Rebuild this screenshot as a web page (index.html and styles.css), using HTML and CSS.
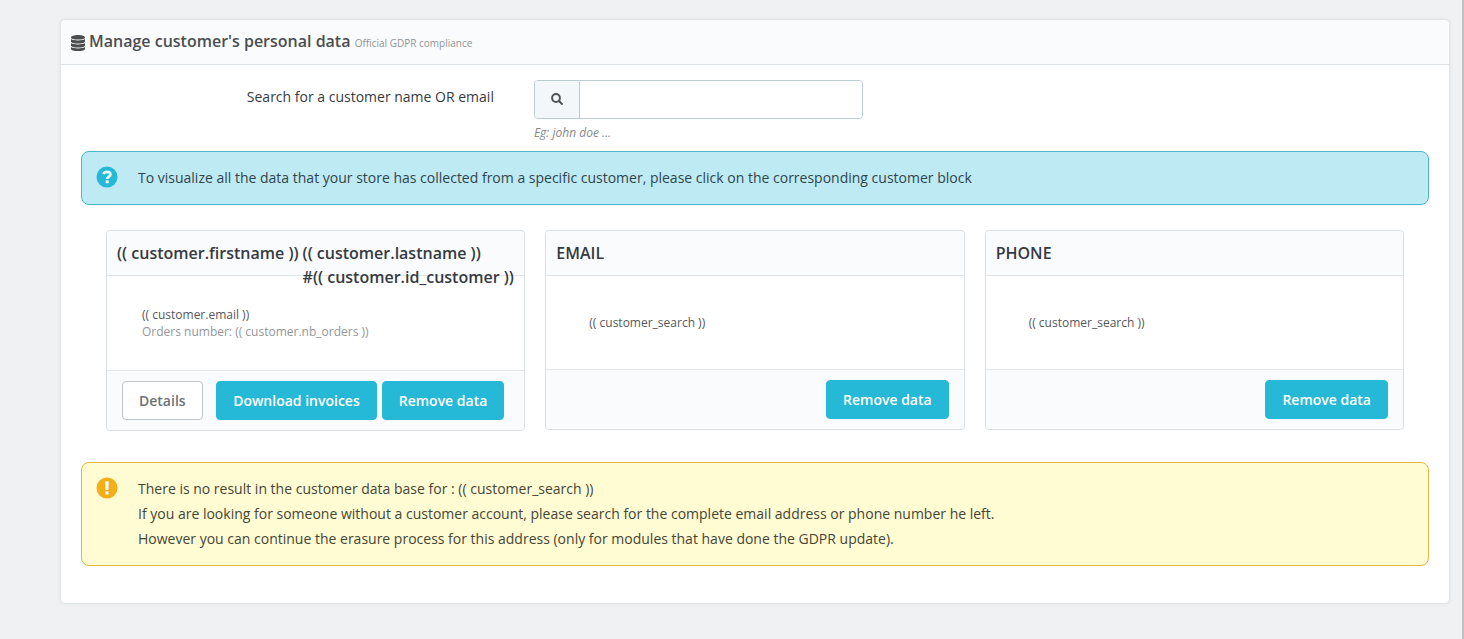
FILE: index.html
```html
<!DOCTYPE html>
<html lang="en">
<head>
<meta charset="utf-8">
<meta name="viewport" content="width=device-width, initial-scale=1">
<title>Manage customer's personal data</title>
<link rel="stylesheet" href="styles.css">
</head>
<body>
<main class="panel">
  <header class="panel-header">
    <svg class="icon-database" viewBox="0 0 16 18" aria-hidden="true">
      <path d="M8 1c4 0 7 1 7 2.400s-3 2.100-7 2.100-7-.8-7-2.100S4 1 8 1z"/>
      <path d="M1 5c1.400 1 4 1.400 7 1.400s5.600-.4 7-1.400v2.500c0 1.300-3 2.100-7 2.100s-7-.8-7-2.100z"/>
      <path d="M1 9c1.400 1 4 1.400 7 1.400s5.600-.4 7-1.400v2.500c0 1.300-3 2.100-7 2.100s-7-.8-7-2.100z"/>
      <path d="M1 13c1.400 1 4 1.400 7 1.400s5.600-.4 7-1.400v2c0 1.300-3 2.100-7 2.100s-7-.8-7-2.100z"/>
    </svg>
    <h1 class="panel-title">Manage customer's personal data <small>Official GDPR compliance</small></h1>
  </header>

  <div class="panel-body">
    <form class="search">
      <label class="search-label" for="customer-search">Search for a customer name OR email</label>
      <div class="search-field">
        <div class="input-group">
          <span class="input-addon">
            <svg class="icon-search" viewBox="0 0 12 12" aria-hidden="true">
              <circle cx="5" cy="5" r="3.900"/>
              <path d="M8 8l3 3"/>
            </svg>
          </span>
          <input class="input" type="text" id="customer-search" aria-describedby="search-help">
        </div>
        <p class="search-help" id="search-help">Eg: john doe ...</p>
      </div>
    </form>

    <div class="alert alert-info">
      <svg class="alert-icon" viewBox="0 0 22 22" aria-hidden="true">
        <circle cx="11" cy="11" r="10.500"/>
        <path class="mark" d="M7.500 8.200C7.900 6.600 9.200 5.800 11 5.800c2 0 3.400 1 3.400 2.600 0 2.200-3.200 2.100-3.200 4.500"/>
        <rect class="dot" x="9.700" y="14.400" width="3" height="2.800"/>
      </svg>
      <p>To visualize all the data that your store has collected from a specific customer, please click on the corresponding customer block</p>
    </div>

    <div class="cards">
      <section class="card">
        <h2 class="card-header"><span>(( customer.firstname ))</span> <span>(( customer.lastname ))<br>#(( customer.id_customer ))</span></h2>
        <div class="card-body card-body-customer">
          <p>(( customer.email ))</p>
          <p class="muted">Orders number: (( customer.nb_orders ))</p>
        </div>
        <footer class="card-footer card-footer-customer">
          <button class="btn btn-default" type="button">Details</button>
          <div class="btn-group">
            <button class="btn btn-primary" type="button">Download invoices</button>
            <button class="btn btn-primary" type="button">Remove data</button>
          </div>
        </footer>
      </section>

      <section class="card">
        <h2 class="card-header">EMAIL</h2>
        <div class="card-body"><p>(( customer_search ))</p></div>
        <footer class="card-footer"><button class="btn btn-primary" type="button">Remove data</button></footer>
      </section>

      <section class="card">
        <h2 class="card-header">PHONE</h2>
        <div class="card-body"><p>(( customer_search ))</p></div>
        <footer class="card-footer"><button class="btn btn-primary" type="button">Remove data</button></footer>
      </section>
    </div>

    <div class="alert alert-warning">
      <svg class="alert-icon" viewBox="0 0 22 22" aria-hidden="true">
        <circle cx="11" cy="11" r="10.500"/>
        <path class="dot" d="M9.200 4.200h3.600l-.4 8.800H9.600z"/>
        <rect class="dot" x="9.400" y="14.400" width="3.200" height="3"/>
      </svg>
      <div>
        <p>There is no result in the customer data base for : (( customer_search ))</p>
        <p>If you are looking for someone without a customer account, please search for the complete email address or phone number he left.</p>
        <p>However you can continue the erasure process for this address (only for modules that have done the GDPR update).</p>
      </div>
    </div>
  </div>
</main>
</body>
</html>
```

FILE: styles.css
```css
*,
*::before,
*::after {
  box-sizing: border-box;
}

body {
  margin: 0;
  min-height: 100vh;
  padding: 19px 12px 35px 60px;
  border-right: 2px solid #c0c0c0;
  background: #eff1f2;
  color: #363a41;
  font-family: "Open Sans", "Noto Sans", sans-serif;
  font-size: 14px;
  line-height: 25px;
}

h1,
h2,
p {
  margin: 0;
}

.panel {
  border: 1px solid #dfe5e9;
  border-radius: 5px;
  background: #fff;
  box-shadow: 0 0 4px rgba(0, 0, 0, 0.06);
}

.panel-header {
  display: flex;
  align-items: center;
  gap: 3px;
  height: 45px;
  padding: 1px 9px 0;
  border-bottom: 1px solid #dce1e5;
  border-radius: 5px 5px 0 0;
  background: #fafbfc;
  color: #4b4e4f;
}

.icon-database {
  width: 16px;
  height: 18px;
  fill: currentColor;
}

.panel-title {
  font-size: 16px;
  font-weight: 600;
}

.panel-title small {
  color: #8f9496;
  font-size: 10px;
  font-weight: 400;
}

.panel-body {
  padding: 15px 20px 37px;
}

.search {
  display: grid;
  grid-template-columns: 33.6% 24.4%;
}

.search-label {
  padding: 4px 40px 0 0;
  text-align: right;
}

.input-group {
  display: flex;
  height: 39px;
  border: 1px solid #bbcdd2;
  border-radius: 4px;
  overflow: hidden;
}

.input-addon {
  display: flex;
  flex: 0 0 45px;
  align-items: center;
  justify-content: center;
  padding-bottom: 2px;
  border-right: 1px solid #bbcdd2;
  background: #f4f7f9;
}

.icon-search {
  width: 12px;
  height: 12px;
  fill: none;
  stroke: #505355;
  stroke-linecap: round;
  stroke-width: 2;
}

.input {
  flex: 1;
  min-width: 0;
  padding: 0 10px;
  border: 0;
  background: #fff;
  color: inherit;
  font: inherit;
}

.search-help {
  padding-top: 4px;
  color: #85898b;
  font-size: 12px;
  font-style: italic;
  line-height: 20px;
}

.alert {
  display: flex;
  gap: 20px;
  padding: 13px 14px 14px;
  border: 1px solid;
  border-radius: 8px;
}

.alert-icon {
  flex: none;
  width: 22px;
  height: 22px;
  margin-top: 1px;
}

.alert-info {
  margin-top: 8px;
  border-color: #4ab6c6;
  background: #beeaf3;
  color: #2f454c;
}

.alert-info .alert-icon {
  fill: #25b9d7;
}

.alert-icon .mark {
  fill: none;
  stroke: #e4f9fd;
  stroke-width: 2.800px;
}

.alert-icon .dot {
  fill: #f4fbf5;
}

.alert-warning {
  border-color: #e0b93f;
  background: #fffbd3;
  color: #454636;
}

.alert-warning .alert-icon {
  fill: #f3af1a;
}

.cards {
  display: grid;
  grid-template-columns: repeat(3, minmax(0, 1fr));
  align-items: start;
  gap: 20px;
  padding: 25px 25px 31px;
}

.card {
  border: 1px solid #d9dfe3;
  border-radius: 4px;
  background: #fff;
}

.card-header {
  display: flex;
  gap: 4px;
  height: 45px;
  padding: 10px;
  border-bottom: 1px solid #dfe4e7;
  border-radius: 4px 4px 0 0;
  background: #fafbfc;
  font-size: 16px;
  font-weight: 600;
  line-height: 24px;
  white-space: nowrap;
}

.card-body {
  padding: 38px 43px;
  color: #54575b;
  font-size: 12px;
  line-height: 17px;
}

.card-body-customer {
  padding: 30px 35px;
}

.muted {
  color: #929699;
}

.card-footer {
  display: flex;
  justify-content: flex-end;
  padding: 10px 15px;
  border-top: 1px solid #e6eaed;
  border-radius: 0 0 4px 4px;
  background: #fafbfc;
}

.card-footer-customer {
  justify-content: space-between;
  padding-right: 20px;
}

.btn-group {
  display: flex;
  gap: 5px;
}

.btn {
  height: 39px;
  padding: 0 16px;
  border: 1px solid #25b9d7;
  border-radius: 4px;
  font: inherit;
  font-weight: 600;
  white-space: nowrap;
  cursor: pointer;
}

.btn-primary {
  background: #25b9d7;
  color: #fff;
}

.btn-default {
  border-color: #bdc5ca;
  background: #fff;
  color: #6c7376;
}
```
